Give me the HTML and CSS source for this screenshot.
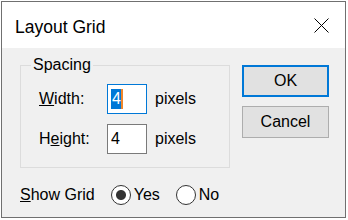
FILE: index.html
```html
<!DOCTYPE html>
<html lang="en">
<head>
  <meta charset="UTF-8">
  <title>Layout Grid</title>
  <link rel="stylesheet" href="styles.css">
</head>
<body>

  <div class="dialog">
    <div class="titlebar">
      <span class="title">Layout Grid</span>
      <svg class="close" width="15" height="15" viewBox="0 0 15 15">
        <path d="M0.5 0.5 L14.5 14.5 M14.5 0.5 L0.5 14.5" stroke="#000" stroke-width="1" fill="none"/>
      </svg>
    </div>

    <div class="content">
      <div class="top">
        <fieldset class="group">
          <legend>Spacing</legend>
          <div class="fields">
            <span class="label"><u>W</u>idth:</span>
            <div class="box focused"><span class="selected">4</span><span class="caret"></span></div>
            <span class="unit">pixels</span>

            <span class="label">H<u>e</u>ight:</span>
            <div class="box">4</div>
            <span class="unit">pixels</span>
          </div>
        </fieldset>

        <div class="buttons">
          <button class="default">OK</button>
          <button>Cancel</button>
        </div>
      </div>

      <div class="showgrid">
        <span><u>S</u>how Grid</span>
        <label class="radio"><input type="radio" name="grid" checked> Yes</label>
        <label class="radio"><input type="radio" name="grid"> No</label>
      </div>
    </div>
  </div>

</body>
</html>
```

FILE: styles.css
```css
* {
  box-sizing: border-box;
}

body {
  margin: 0;
  background: #fff;
  font-family: 'Liberation Sans', Arial, sans-serif;
  font-size: 16px;
  color: #000;
}

.dialog {
  margin: 1px;
  width: 345px;
  height: 217px;
  border: 1px solid #707070;
  background: #f0f0f0;
  display: flex;
  flex-direction: column;
}

.titlebar {
  height: 46px;
  background: #fff;
  display: flex;
  align-items: center;
  justify-content: space-between;
  padding: 0 16px 0 13px;
}

.title {
  font-size: 17.5px;
  padding-top: 4px;
}

.close {
  display: block;
}

.content {
  padding-left: 18px;
}

.top {
  display: flex;
  align-items: flex-start;
}

/* Spacing group */
.group {
  margin: 8px 0 0 0;
  padding: 10px 0 13px 0;
  width: 210px;
  border: 1px solid #dcdcdc;
}

.group legend {
  margin-left: 10px;
  padding: 0 2px;
  line-height: 18px;
}

.fields {
  padding-left: 18px;
  display: grid;
  grid-template-columns: 60px 40px auto;
  grid-auto-rows: 30px;
  column-gap: 8px;
  row-gap: 10px;
  align-items: center;
}

.box {
  height: 30px;
  border: 1px solid #7a7a7a;
  background: #fff;
  padding: 0 3px;
  display: flex;
  align-items: center;
}

.box.focused {
  border-color: #0078d7;
}

.selected {
  background: #0078d7;
  color: #fff;
  line-height: 20px;
  padding: 0 0 0 1px;
}

.caret {
  width: 2px;
  height: 20px;
  background: #f0862a;
}

/* Buttons */
.buttons {
  margin: 17px 0 0 12px;
  display: flex;
  flex-direction: column;
  gap: 9px;
}

.buttons button {
  width: 87px;
  height: 32px;
  font-family: 'Liberation Sans', Arial, sans-serif;
  font-size: 16px;
  color: #000;
  background: #e1e1e1;
  border: 1px solid #adadad;
  padding: 0;
}

.buttons button.default {
  border: 2px solid #0078d7;
}

/* Show grid row */
.showgrid {
  margin-top: 16px;
  display: flex;
  align-items: center;
  gap: 16px;
  height: 22px;
}

.radio {
  display: inline-flex;
  align-items: center;
  gap: 3px;
}

.radio input {
  appearance: none;
  margin: 0;
  width: 20px;
  height: 20px;
  border: 1px solid #333;
  border-radius: 50%;
  background: #fff;
}

.radio input:checked {
  background: radial-gradient(circle, #333 0 4.5px, #fff 5.5px);
}
```
